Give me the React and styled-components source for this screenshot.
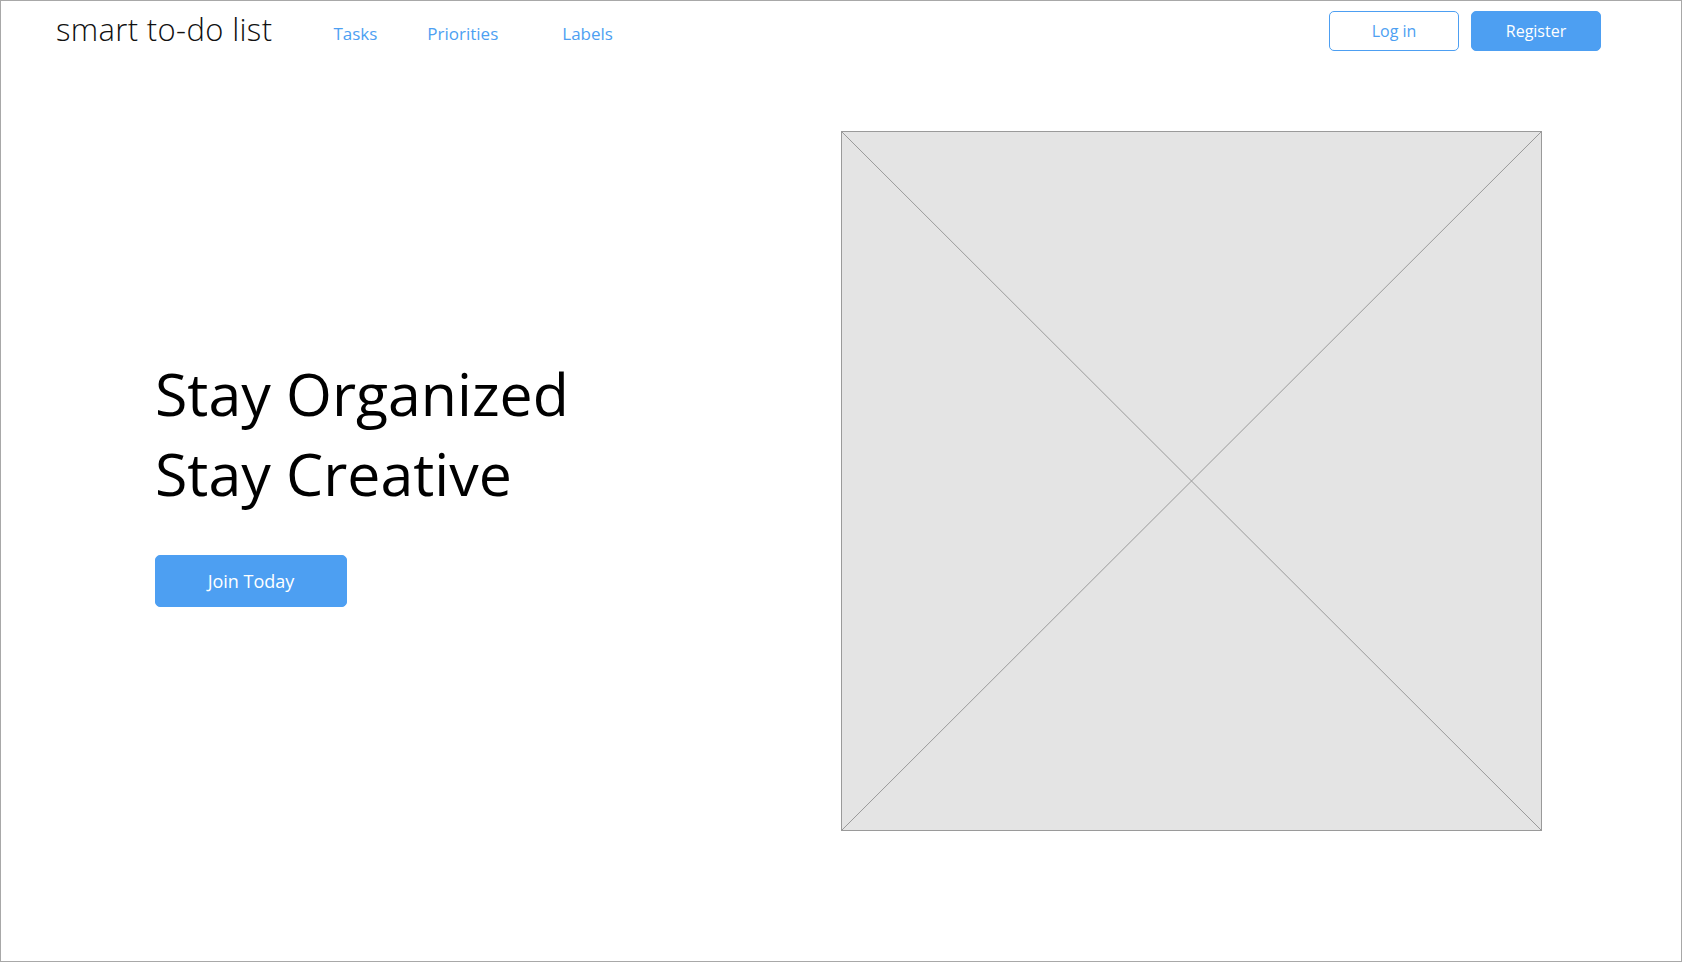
import React from "react";
import styled, { createGlobalStyle } from "styled-components";

const GlobalStyle = createGlobalStyle`
  html, body { margin: 0; padding: 0; background: #fff; }
  * { box-sizing: border-box; }
  body { font-family: "Open Sans", "Liberation Sans", sans-serif; }
`;

const BLUE = "#4d9ff2";

const Frame = styled.div`
  width: 1682px;
  height: 962px;
  border: 1px solid #a8a8a8;
  display: flex;
  flex-direction: column;
  overflow: hidden;
`;

const Header = styled.header`
  display: flex;
  align-items: center;
  height: 60px;
  padding: 0 80px 0 55px;
`;

const Logo = styled.div`
  font-size: 31px;
  font-weight: 300;
  color: #111;
  letter-spacing: 0.35px;
  margin-top: -5px;
`;

const Nav = styled.nav`
  display: flex;
  align-items: center;
  margin-top: 4px;
`;

const NavLink = styled.a`
  color: ${BLUE};
  font-size: 17px;
  text-decoration: none;
  margin-left: ${(p) => p.$gap}px;
`;

const Actions = styled.div`
  display: flex;
  gap: 12px;
  margin-left: auto;
  margin-top: -1px;
`;

const Button = styled.button`
  width: ${(p) => p.$w}px;
  height: ${(p) => p.$h}px;
  border-radius: 5px;
  font-family: inherit;
  font-size: ${(p) => p.$fs}px;
  cursor: pointer;
  border: 1px solid ${BLUE};
  background: ${(p) => (p.$primary ? BLUE : "#fff")};
  color: ${(p) => (p.$primary ? "#fff" : BLUE)};
`;

const Main = styled.main`
  flex: 1;
  display: flex;
  align-items: flex-start;
  padding: 70px 139px 0 154px;
`;

const Hero = styled.section`
  flex: 1;
  height: 700px;
  display: flex;
  flex-direction: column;
  justify-content: center;
  padding-bottom: 3px;
`;

const Title = styled.h1`
  margin: 0;
  font-size: 59px;
  font-weight: 400;
  line-height: 80px;
  color: #000;
`;

const CtaWrap = styled.div`
  margin-top: 42px;
`;

const Placeholder = styled.div`
  width: 701px;
  height: 700px;
  background: #e4e4e4;
  border: 1px solid #9a9a9a;
  flex-shrink: 0;
`;

const Cross = styled.svg`
  display: block;
  width: 100%;
  height: 100%;
`;

export default function App() {
  return (
    <>
      <GlobalStyle />
      <Frame>
        <Header>
          <Logo>smart to-do list</Logo>
          <Nav>
            <NavLink href="#" $gap={61}>Tasks</NavLink>
            <NavLink href="#" $gap={50}>Priorities</NavLink>
            <NavLink href="#" $gap={64}>Labels</NavLink>
          </Nav>
          <Actions>
            <Button $w={130} $h={40} $fs={16}>Log in</Button>
            <Button $w={130} $h={40} $fs={16} $primary>Register</Button>
          </Actions>
        </Header>
        <Main>
          <Hero>
            <Title>
              Stay Organized
              <br />
              Stay Creative
            </Title>
            <CtaWrap>
              <Button $w={192} $h={52} $fs={18} $primary>Join Today</Button>
            </CtaWrap>
          </Hero>
          <Placeholder>
            <Cross viewBox="0 0 699 698" preserveAspectRatio="none">
              <line x1="0" y1="0" x2="699" y2="698" stroke="#9a9a9a" strokeWidth="1" />
              <line x1="699" y1="0" x2="0" y2="698" stroke="#9a9a9a" strokeWidth="1" />
            </Cross>
          </Placeholder>
        </Main>
      </Frame>
    </>
  );
}
